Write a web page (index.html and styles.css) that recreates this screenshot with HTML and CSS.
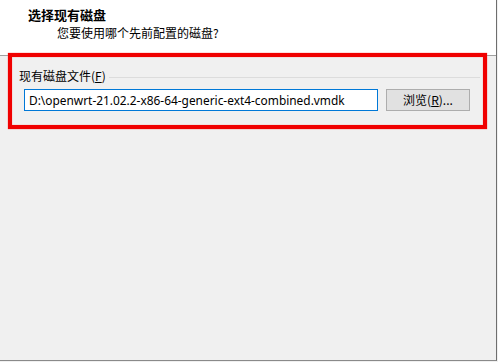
FILE: index.html
```html
<!DOCTYPE html>
<html lang="zh-CN">
<head>
<meta charset="utf-8">
<title>选择现有磁盘</title>
<link rel="stylesheet" href="styles.css">
</head>
<body>
<div class="window">
  <div class="header">
    <div class="title">选择现有磁盘</div>
    <div class="subtitle">您要使用哪个先前配置的磁盘?</div>
  </div>
  <div class="content">
    <div class="group">
      <div class="group-head">
        <span class="group-label">现有磁盘文件(<u>F</u>)</span>
        <span class="group-line"></span>
      </div>
      <div class="file-row">
        <div class="textbox">D:\openwrt-21.02.2-x86-64-generic-ext4-combined.vmdk</div>
        <div class="button">浏览(<u>R</u>)...</div>
      </div>
    </div>
  </div>
  <div class="highlight"></div>
</div>
</body>
</html>
```

FILE: styles.css
```css
html, body {
  margin: 0;
  padding: 0;
  background: #f0f0f0;
}
.window {
  position: relative;
  width: 497px;
  height: 361px;
  border-right: 1px solid #6e6e6e;
  border-bottom: 1px solid #8a8a8a;
  box-sizing: border-box;
  background: #f0f0f0;
  font-family: "Noto Sans CJK SC", "Noto Sans", sans-serif;
  font-size: 12px;
  color: #000;
}
.header {
  background: #fff;
  height: 56px;
  box-sizing: border-box;
  border-bottom: 1px solid #a0a0a0;
  padding-top: 6px;
}
.title {
  font-weight: bold;
  font-size: 13px;
  line-height: 17px;
  margin-left: 28px;
}
.subtitle {
  margin-left: 57px;
  line-height: 17px;
  margin-top: 1px;
}
.content {
  padding: 14px 16px 0 10px;
}
.group-head {
  display: flex;
  align-items: center;
  height: 12px;
}
.group-label {
  padding-left: 9px;
  line-height: 12px;
}
.group-line {
  flex: 1;
  height: 1px;
  background: #dcdcdc;
  margin-left: 3px;
  margin-top: 2px;
}
.file-row {
  display: flex;
  gap: 8px;
  margin-top: 7px;
  padding-left: 14px;
}
.textbox {
  width: 354px;
  height: 22px;
  box-sizing: border-box;
  border: 1px solid #0078d7;
  background: #fff;
  padding-left: 4px;
  line-height: 21px;
  font-family: "Noto Sans", "Noto Sans CJK SC", sans-serif;
  font-size: 11.9px;
  white-space: nowrap;
  overflow: hidden;
}
.button {
  width: 84px;
  height: 22px;
  box-sizing: border-box;
  border: 1px solid #adadad;
  background: #e1e1e1;
  text-align: center;
  line-height: 20px;
}
.highlight {
  position: absolute;
  left: 8px;
  top: 53px;
  width: 479px;
  height: 76px;
  box-sizing: border-box;
  border: 4px solid #f00000;
  box-shadow: 0 0 1px #ff4040, inset 0 0 1px #ff4040;
}
```
